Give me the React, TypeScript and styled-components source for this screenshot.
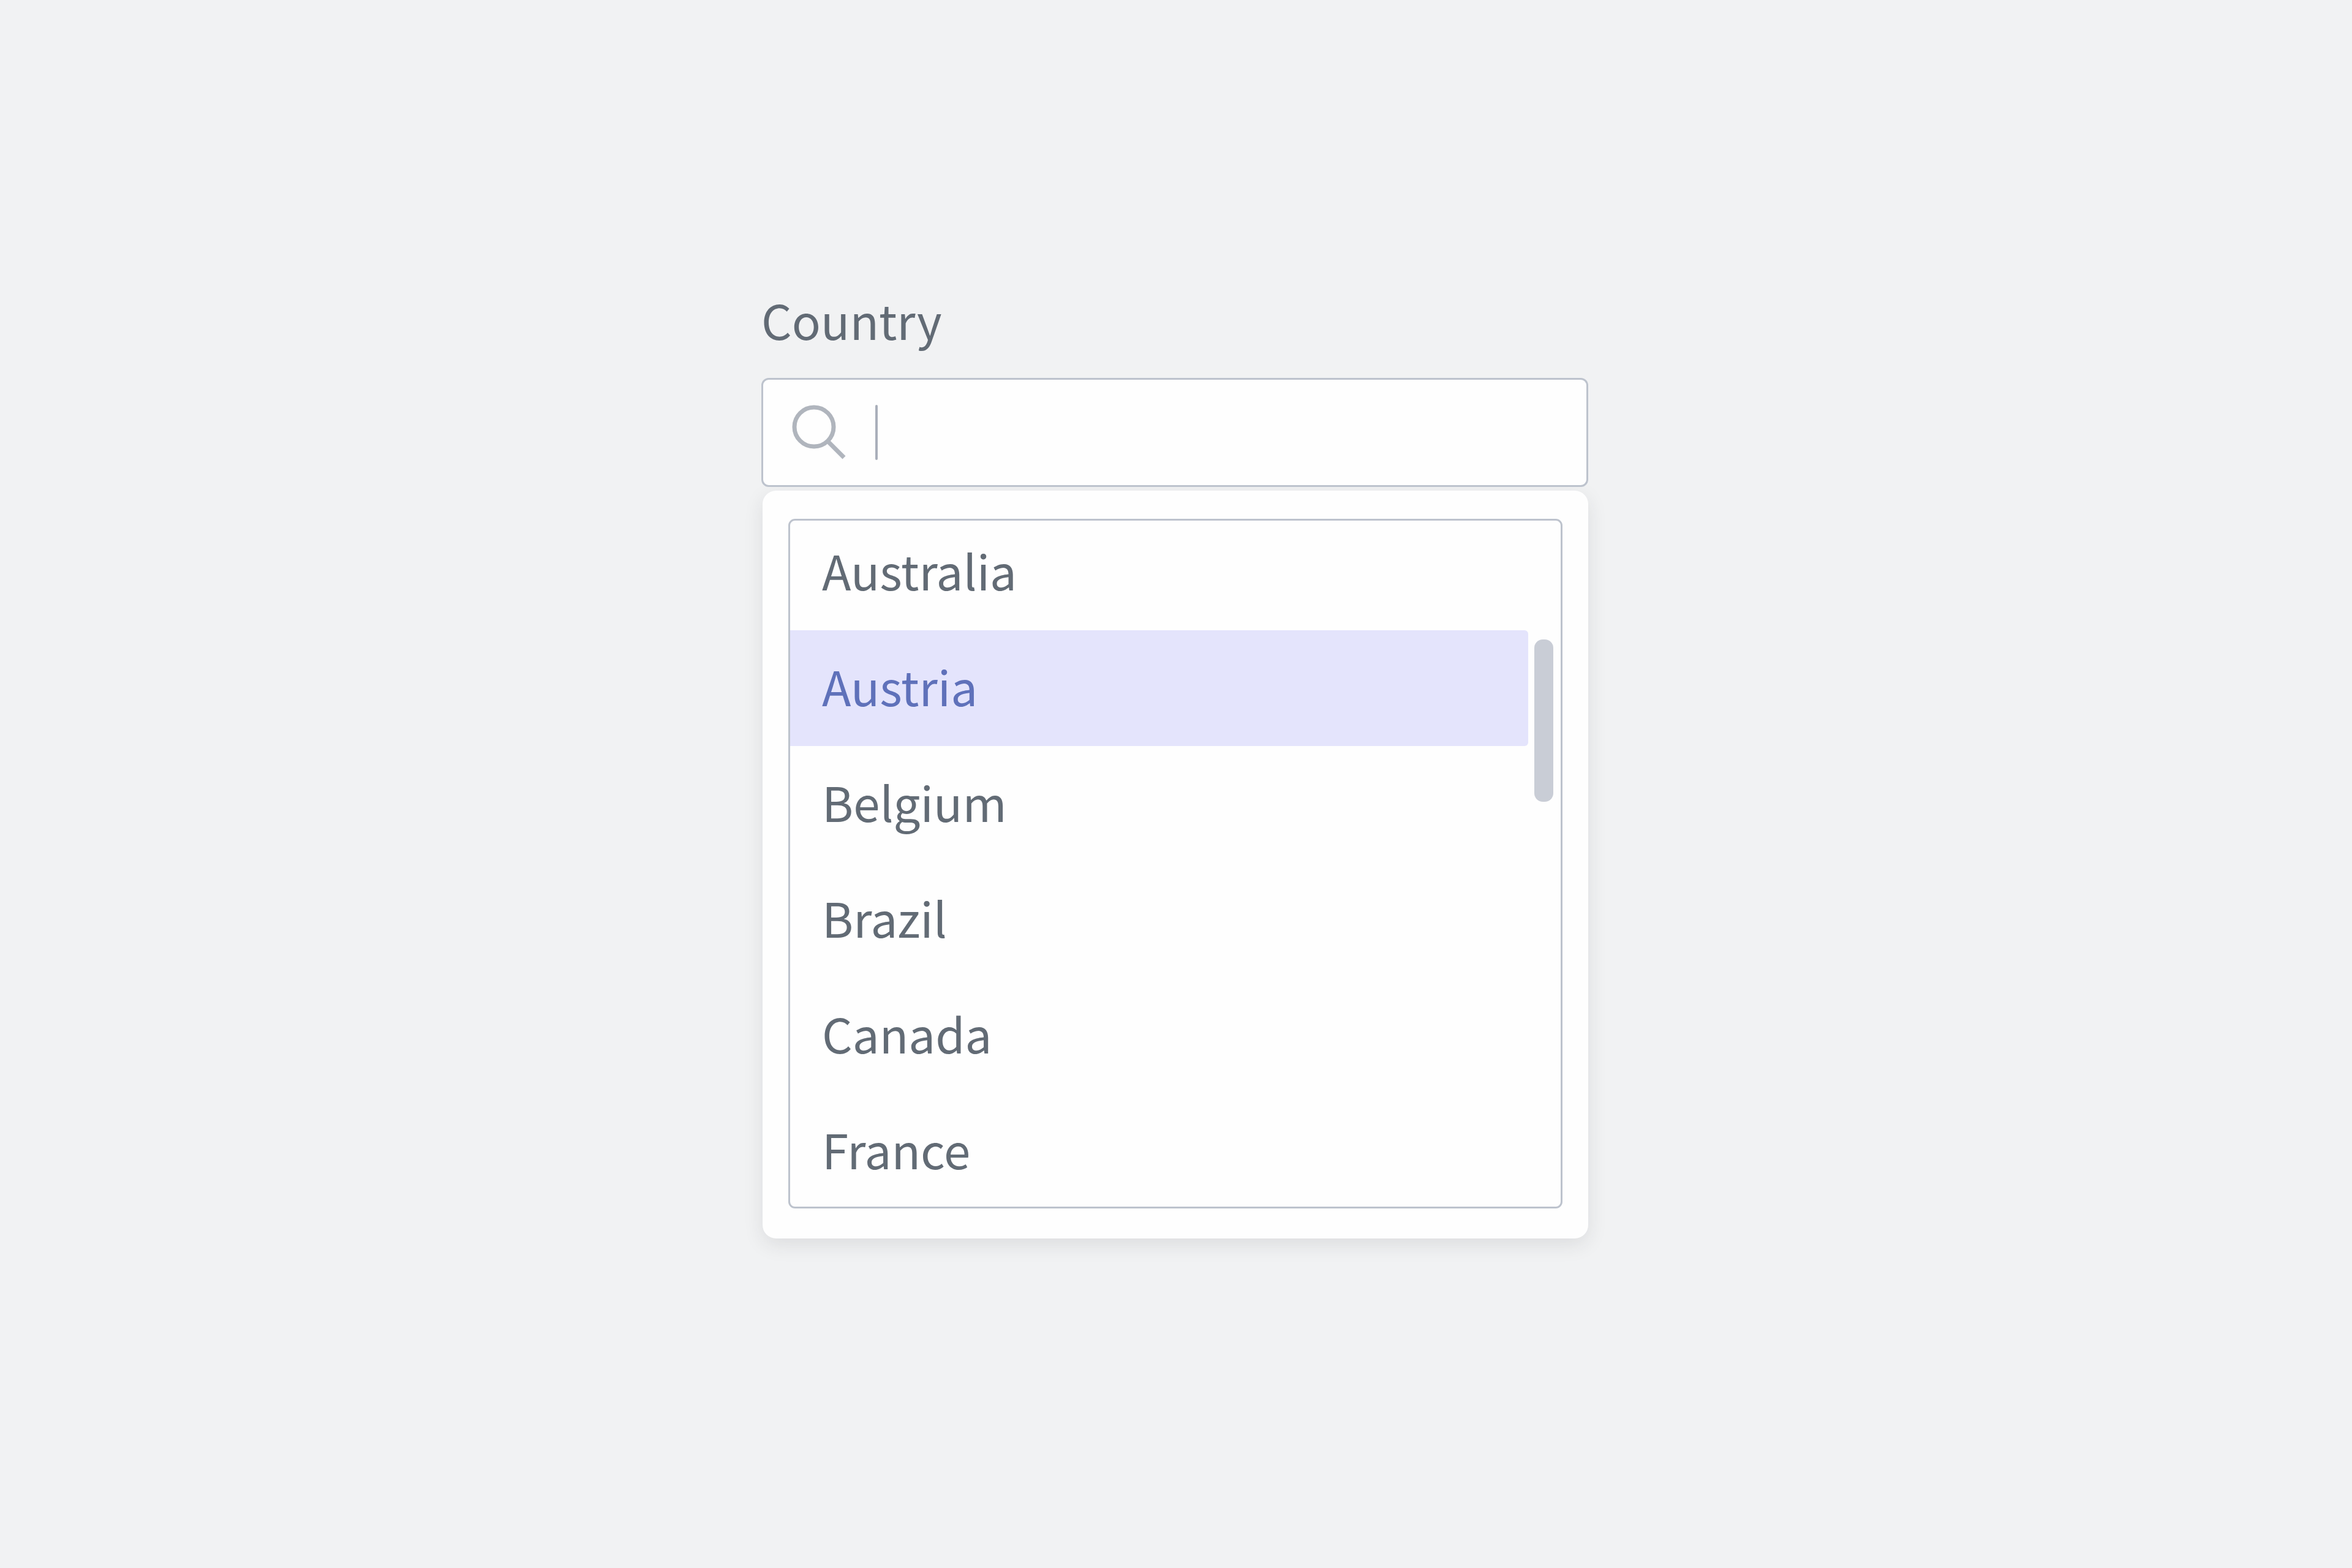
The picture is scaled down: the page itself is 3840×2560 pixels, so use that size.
import React, { useState } from "react";
import styled, { createGlobalStyle } from "styled-components";

const color = {
  page: "#f1f2f3",
  surface: "#fefefe",
  border: "#bdc3cd",
  text: "#626b75",
  icon: "#b0b5bd",
  caret: "#a9afba",
  thumb: "#c9cdd6",
  activeBg: "#e4e4fc",
  activeText: "#5f71ba",
};

const countries = ["Australia", "Austria", "Belgium", "Brazil", "Canada", "France"];

const GlobalStyle = createGlobalStyle`
  *, *::before, *::after { box-sizing: border-box; }
  body {
    margin: 0;
    background: ${color.page};
    color: ${color.text};
    font-family: "Noto Sans CJK SC", "Noto Sans", sans-serif;
    font-size: 78px;
    line-height: 120px;
  }
`;

const Page = styled.main`
  display: flex;
  justify-content: center;
  align-items: flex-start;
  min-height: 100vh;
  padding: 461px 4px 120px 0;
`;

const Combobox = styled.div`
  display: flex;
  flex-direction: column;
  width: 100%;
  max-width: 1350px;
`;

const Label = styled.label`
  align-self: flex-start;
  margin-bottom: 36px;
`;

const SearchBox = styled.div`
  position: relative;
  z-index: 1;
  display: flex;
  align-items: center;
  height: 178px;
  padding: 0 40px 0 47px;
  border: 3px solid ${color.border};
  border-radius: 12px;
  background: ${color.surface};
`;

const SearchIcon = styled.svg`
  flex: none;
  width: 90px;
  height: 90px;
  fill: none;
  stroke: ${color.icon};
  stroke-width: 7;
`;

const Caret = styled.span`
  flex: none;
  width: 4px;
  height: 90px;
  margin-left: 46px;
  border-radius: 2px;
  background: ${color.caret};
`;

const SearchInput = styled.input`
  flex: 1;
  min-width: 0;
  padding: 0;
  border: 0;
  outline: 0;
  background: transparent;
  color: inherit;
  font: inherit;
  caret-color: transparent;
`;

const Panel = styled.div`
  margin: 6px 0 0 2px;
  padding: 46px 42px 49px;
  border-radius: 22px;
  background: ${color.surface};
  box-shadow: 0 10px 32px rgba(40, 42, 48, 0.1);
`;

const Frame = styled.div`
  display: flex;
  overflow: hidden;
  border: 3px solid ${color.border};
  border-radius: 11px;
`;

/* The list rests slightly scrolled, so its first and last rows are clipped. */
const List = styled.div`
  flex: 1;
  display: flex;
  flex-direction: column;
  margin: -10px 0 -4px;
`;

const Option = styled.button<{ $active: boolean }>`
  height: 189px;
  padding: 0 52px 10px;
  border: 0;
  border-radius: 0 6px 6px 0;
  background: ${(p) => (p.$active ? color.activeBg : "transparent")};
  color: ${(p) => (p.$active ? color.activeText : color.text)};
  font: inherit;
  text-align: left;
  cursor: pointer;
`;

const Rail = styled.div`
  flex: none;
  padding: 194px 12px 0 10px;
`;

const Thumb = styled.div`
  width: 31px;
  height: 265px;
  border-radius: 14px;
  background: ${color.thumb};
`;

export default function App() {
  const [query, setQuery] = useState("");
  const [active, setActive] = useState("Austria");

  return (
    <>
      <GlobalStyle />
      <Page>
        <Combobox>
          <Label htmlFor="country">Country</Label>
          <SearchBox>
            <SearchIcon viewBox="0 0 90 90" aria-hidden="true">
              <circle cx="36" cy="36" r="32" />
              <path d="M60 61 L85 86" />
            </SearchIcon>
            <Caret />
            <SearchInput
              id="country"
              role="combobox"
              aria-expanded="true"
              aria-controls="country-list"
              autoComplete="off"
              value={query}
              onChange={(e) => setQuery(e.target.value)}
            />
          </SearchBox>
          <Panel>
            <Frame>
              <List id="country-list" role="listbox">
                {countries.map((name) => (
                  <Option
                    key={name}
                    type="button"
                    role="option"
                    aria-selected={name === active}
                    $active={name === active}
                    onClick={() => setActive(name)}
                  >
                    {name}
                  </Option>
                ))}
              </List>
              <Rail>
                <Thumb />
              </Rail>
            </Frame>
          </Panel>
        </Combobox>
      </Page>
    </>
  );
}
